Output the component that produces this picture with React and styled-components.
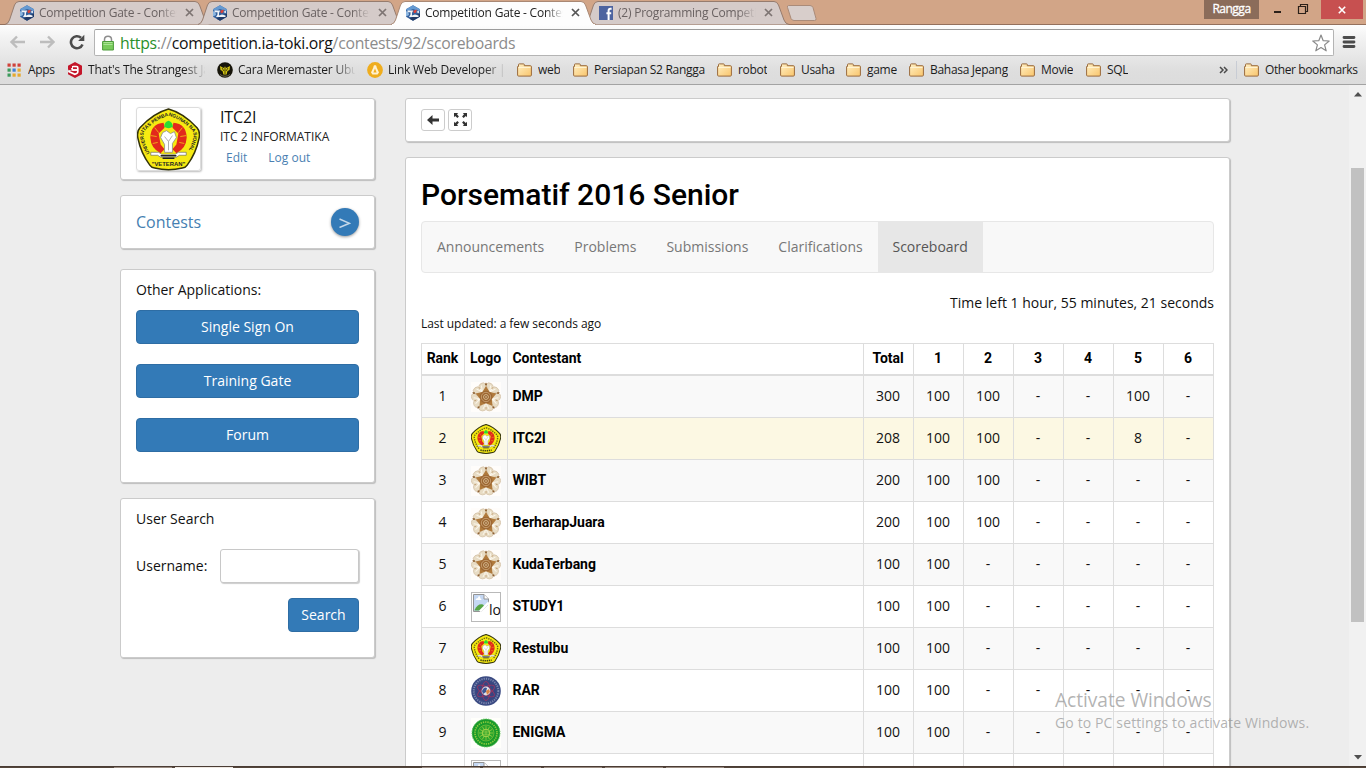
import React from "react";
import styled, { createGlobalStyle, css } from "styled-components";

const Global = createGlobalStyle`
  *, *::before, *::after { box-sizing: border-box; }
  html, body { margin: 0; padding: 0; overflow: hidden; }
  body { font-family: "Open Sans", sans-serif; font-size: 14px; color: #111; }
  svg { display: block; flex: none; }
`;

const Window = styled.div`
  position: relative;
  width: 1366px;
  height: 768px;
  display: flex;
  flex-direction: column;
  overflow: hidden;
`;

/* ---------- title bar ---------- */
const TitleBar = styled.div`
  height: 25px;
  flex: none;
  display: flex;
  align-items: flex-start;
  background: #d2a587;
  box-shadow: inset 0 -1px 0 #94705c;
  padding-left: 5px;
`;
const TabBox = styled.div`
  position: relative;
  z-index: ${(p) => (p.$active ? 3 : 1)};
  width: 205px;
  height: 25px;
  margin-right: -12px;
  flex: none;
  display: flex;
  align-items: center;
  padding: 0 0 0 14px;
`;
const TabShape = styled.svg`
  position: absolute;
  inset: 0;
  z-index: -1;
`;
const TabTitle = styled.span`
  width: 139px;
  margin-left: 4px;
  overflow: hidden;
  white-space: nowrap;
  font-size: 12px;
  letter-spacing: -0.22px;
  color: ${(p) => (p.$active ? "#222" : "#6a6262")};
  mask-image: linear-gradient(to right, #000 120px, transparent 138px);
`;
const TabClose = styled.svg`
  margin-left: 7px;
`;
const WindowControls = styled.div`
  margin-left: auto;
  display: flex;
`;
const UserBadge = styled.div`
  width: 55px;
  height: 19px;
  line-height: 18px;
  text-align: center;
  margin-right: 6px;
  background: #8b6c5a;
  color: #fff;
  font-size: 12px;
  letter-spacing: -0.5px;
  -webkit-text-stroke: 0.3px #fff;
`;
const CloseButton = styled.div`
  width: 42px;
  height: 19px;
  margin: 0 3px 0 6px;
  background: #c75050;
  display: flex;
  align-items: center;
  justify-content: center;
`;

/* ---------- toolbar ---------- */
const Chrome = styled.div`
  height: 60px;
  flex: none;
  background: linear-gradient(#fdfdfd 0, #f3f3f3 12px, #dedede 46px, #dcdcdc);
  border-bottom: 1px solid #a3a3a3;
`;
const Toolbar = styled.div`
  display: flex;
  align-items: center;
  height: 34px;
  padding: 0 9px;
`;
const Omnibox = styled.div`
  width: 1240px;
  height: 27px;
  margin: 1px 8px 0 8px;
  background: #fff;
  border: 1px solid #b4b4b4;
  border-top-color: #9b9b9b;
  border-radius: 2px;
  display: flex;
  align-items: center;
  padding: 0 3px 0 7px;
`;
const Url = styled.span`
  flex: 1;
  margin-left: 6px;
  font-size: 15.8px;
  letter-spacing: -0.26px;
  line-height: 24px;
  white-space: nowrap;
  color: #8c8c8c;
`;
const Secure = styled.span`
  color: #2a8f2a;
`;
const Host = styled.span`
  color: #111;
`;
const NavIcons = styled.div`
  display: flex;
  gap: 12px;
  align-items: center;
`;
const Bookmarks = styled.div`
  display: flex;
  align-items: center;
  height: 25px;
  margin-top: -2px;
  padding-left: 7px;
`;
const Bookmark = styled.div`
  width: ${(p) => p.$w}px;
  flex: none;
  display: flex;
  align-items: center;
  gap: ${(p) => p.$gap || 6}px;
`;
const BookmarkText = styled.span`
  font-size: 12px;
  line-height: 18px;
  letter-spacing: ${(p) => p.$ls || "-0.3px"};
  color: #1c1c1c;
  white-space: nowrap;
  overflow: hidden;
  ${(p) =>
    p.$fade &&
    css`
      width: 117px;
      letter-spacing: -0.2px;
      mask-image: linear-gradient(to right, #000 96px, transparent 118px);
    `}
`;
const Divider = styled.div`
  width: 1px;
  height: 18px;
  background: #c8ccd4;
  margin-left: 15px;
  margin-right: 7px;
`;
const More = styled.div`
  margin-left: auto;
  margin-right: -7px;
  display: flex;
`;

/* ---------- page ---------- */
const Viewport = styled.div`
  height: 681px;
  flex: none;
  display: flex;
  background: #ededed;
  overflow: hidden;
`;
const Page = styled.div`
  width: 1349px;
  display: flex;
  gap: 30px;
  padding: 13px 0 0 120px;
`;
const Sidebar = styled.div`
  width: 255px;
  display: flex;
  flex-direction: column;
`;
const Main = styled.div`
  width: 825px;
`;
const Card = styled.section`
  background: #fff;
  border: 1px solid #cbcbcb;
  border-radius: 3px;
  box-shadow: 1px 1px 1px #bdbdbd;
  height: ${(p) => p.$h}px;
  flex: none;
  padding: ${(p) => p.$pad || "0 15px"};
  margin-bottom: ${(p) => p.$mb ?? 15}px;
`;
const ProfileCard = styled(Card)`
  display: flex;
  gap: 19px;
`;
const Avatar = styled.div`
  width: 65px;
  height: 64px;
  border: 1px solid #ddd;
  border-radius: 3px;
  box-shadow: 1px 1px 2px #bbb;
`;
const ProfileName = styled.div`
  font-size: 16px;
  line-height: 20px;
  letter-spacing: -0.1px;
  margin-top: 0;
`;
const ProfileFull = styled.div`
  font-size: 12px;
  line-height: 19px;
  color: #222;
`;
const ProfileLinks = styled.div`
  display: flex;
  gap: 21px;
  padding-left: 6px;
  font-size: 12px;
  line-height: 23px;
  color: #4a7fb2;
`;
const ContestsCard = styled(Card)`
  display: flex;
  align-items: center;
  justify-content: space-between;
  font-size: 16px;
  color: #467fb2;
`;
const RoundArrow = styled.div`
  width: 28px;
  height: 28px;
  border-radius: 50%;
  background: #337ab7;
  box-shadow: 0 1px 3px #999;
  display: flex;
  align-items: center;
  justify-content: center;
`;
const Label = styled.div`
  font-size: 14px;
  line-height: 20px;
  margin-bottom: ${(p) => p.$mb || 0}px;
`;
const Button = styled.div`
  height: 34px;
  line-height: 32px;
  width: ${(p) => p.$w || "auto"};
  margin-bottom: 20px;
  text-align: center;
  color: #fff;
  font-size: 14px;
  background: #337ab7;
  border: 1px solid #2e6da4;
  border-radius: 4px;
`;
const Field = styled.div`
  display: flex;
  align-items: center;
  justify-content: space-between;
  margin: 20px 0 15px;
`;
const Input = styled.input`
  width: 139px;
  height: 34px;
  border: 1px solid #c8c8c8;
  border-radius: 3px;
  box-shadow: 1px 1px 1px #ccc;
  background: #fff;
  outline: none;
`;
const Right = styled.div`
  display: flex;
  justify-content: flex-end;
`;
const ToolCard = styled(Card)`
  display: flex;
  gap: 3px;
`;
const SmallButton = styled.div`
  width: 24px;
  height: 22px;
  border: 1px solid #ccc;
  border-radius: 3px;
  display: flex;
  align-items: center;
  justify-content: center;
  padding-bottom: 1px;
`;
const Title = styled.h1`
  margin: 0;
  font: 500 30px/33px Roboto, sans-serif;
  color: #000;
  letter-spacing: 0;
`;
const NavBar = styled.nav`
  margin-top: 10px;
  height: 52px;
  border: 1px solid #e7e7e7;
  border-radius: 4px;
  background: #f8f8f8;
  display: flex;
`;
const NavItem = styled.div`
  padding: 0 ${(p) => (p.$active ? 14.8 : 15)}px;
  line-height: 50px;
  color: ${(p) => (p.$active ? "#555" : "#777")};
  background: ${(p) => (p.$active ? "#e7e7e7" : "none")};
`;
const TimeLeft = styled.div`
  margin-top: 20px;
  text-align: right;
  line-height: 20px;
`;
const Updated = styled.div`
  font-size: 12px;
  line-height: 20px;
  letter-spacing: -0.05px;
  margin-bottom: 9px;
  margin-top: 1px;
`;
const Table = styled.div`
  width: 793px;
  border-left: 1px solid #ddd;
  border-top: 1px solid #ddd;
`;
const Row = styled.div`
  display: grid;
  grid-template-columns: 43px 43px 356px repeat(7, 50px);
  height: ${(p) => (p.$head ? 32 : 42)}px;
  background: ${(p) => (p.$mine ? "#fcf8e3" : p.$odd ? "#f9f9f9" : "#fff")};
`;
const Cell = styled.div`
  border-right: 1px solid #ddd;
  border-bottom: ${(p) => (p.$head ? 2 : 1)}px solid #ddd;
  display: flex;
  align-items: center;
  justify-content: ${(p) => (p.$left ? "flex-start" : "center")};
  padding: ${(p) => (p.$left ? "0 4.5px 2px" : p.$logo ? "0" : "0 1px 2px 0")};
  ${(p) =>
    p.$bold &&
    css`
      font-family: Roboto, sans-serif;
      font-weight: 700;
      color: #000;
      letter-spacing: -0.05px;
    `}
`;
const BrokenBox = styled.div`
  width: 30px;
  height: 30px;
  border: 1px solid #b9b9b9;
  display: flex;
  align-items: flex-start;
  overflow: hidden;
  padding: 1px;
  background: #fff;
  line-height: 32px;
`;

/* ---------- scrollbar, watermark, taskbar ---------- */
const ScrollTrack = styled.div`
  width: 17px;
  background: #f1f1f1;
  display: flex;
  flex-direction: column;
  align-items: center;
  padding: 7px 0 6px;
`;
const Thumb = styled.div`
  width: 13px;
  height: 454px;
  margin-top: 71px;
  margin-bottom: auto;
  background: #c1c1c1;
`;
const Watermark = styled.div`
  position: absolute;
  left: 1055px;
  top: 688px;
  color: rgba(150, 150, 150, 0.72);
  white-space: nowrap;
`;
const MarkTitle = styled.div`
  font-size: 19.2px;
  line-height: 24px;
  letter-spacing: -0.05px;
`;
const MarkText = styled.div`
  font-size: 14px;
  line-height: 21px;
  letter-spacing: 0.13px;
`;
const Taskbar = styled.div`
  height: 2px;
  flex: none;
  background: #54463b;
  display: flex;
  align-items: flex-end;
  padding-left: 114px;
  gap: 3px;
  border-top: 1px solid #4a3c34;
`;
const Task = styled.div`
  width: 58px;
  height: 1px;
  margin-left: ${(p) => p.$ml || 0}px;
  background: ${(p) => (p.$on ? "#eee8e2" : "#9b8d83")};
`;
const NewTab = styled.svg`
  margin-left: 8px;
`;

/* ---------- drawings ---------- */
const TokiIcon = () => (
  <svg width="16" height="16" viewBox="0 0 16 16">
    <path d="M8 .3 15 4.200V11.800L8 15.700 1 11.800V4.200Z" fill="#35609c" />
    <path d="M8 .3 15 4.200V6L11 5 8 4 3.500 6 1 5V4.200Z" fill="#659ad2" />
    <path d="M1 6 3.500 7.500 4 10 1 11.500Z" fill="#8db7e2" />
    <path d="M9 11 15 8.500V11.800L8 15.700 4.500 13.700Z" fill="#223a66" />
    <path d="M2.500 5.500H8.200L7 8V10.500L10 9.500 13.500 10.500V12H4L5.500 9.500V7.300H2.500Z" fill="#f0f3f8" />
    <path d="M8.300 5.800 11.800 4.600 11.200 7.600 9 8.300Z" fill="#df4338" />
    <path d="M11.500 7 13.800 5.500V8.300Z" fill="#fff" />
  </svg>
);
const FacebookIcon = () => (
  <svg width="16" height="16" viewBox="0 0 16 16">
    <path fill="#4d64a0" d="M1 1h14v14H1z" />
    <path d="M13.6 3.8h-1.2c-1.3 0-1.8.7-1.8 1.9V15M8.4 8.3h4.800" fill="none" stroke="#fff" strokeWidth="2" />
  </svg>
);
const Folder = () => (
  <svg width="15" height="14" viewBox="0 0 15 14">
    <defs>
      <linearGradient id="fold" x1="0" y1="0" x2="1" y2="1">
        <stop offset="0" stopColor="#fff0c4" />
        <stop offset="1" stopColor="#f9c56c" />
      </linearGradient>
    </defs>
    <path d="M.6 12V3.500H1.500V1.600Q1.500 .9 2.200 .9H6.600Q7.300 .9 7.300 1.600V2.700H13.400Q14.400 2.700 14.400 3.700V12Q14.400 13.100 13.400 13.100H1.600Q.6 13.100 .6 12Z" fill="url(#fold)" stroke="#9a6a3c" strokeWidth="1" />
    <path d="M1.500 4.400H13.500" stroke="#fff5d8" />
  </svg>
);
const AppsIcon = () => {
  const c = ["#d0423a", "#d0423a", "#d0423a", "#3c9a5c", "#3f7fd5", "#e6a92e", "#3c9a5c", "#e6a92e", "#e6a92e"];
  return (
    <svg width="14" height="14" viewBox="0 0 14 14">
      {c.map((f, i) => (
        <rect key={i} x={(i % 3) * 5 + 0.5} y={Math.floor(i / 3) * 5 + 0.5} width="3.2" height="3.2" fill={f} />
      ))}
    </svg>
  );
};
const NineIcon = () => (
  <svg width="16" height="16" viewBox="0 0 16 16">
    <path d="M8 0 15 3.800V12.200L8 16 1 12.200V8.500L5 10.500 8 11.500V8.500L1 5.500V3.800Z" fill="#c4162a" />
    <path d="M10.800 8H6.200Q4.900 8 4.900 6.700V5.900Q4.900 4.500 6.200 4.500H9.500Q10.800 4.500 10.800 5.900V9.800Q10.800 11 9.700 11.500L7.800 12.300 1.200 9.200" fill="#c4162a" stroke="#fff" strokeWidth="1.700" />
    <path d="M1 5 5 3V8.500L1 7.700Z" fill="#c4162a" />
    <path d="M5 6V6.700Q5 8 6.200 8H10.500" fill="none" stroke="#fff" strokeWidth="1.700" />
  </svg>
);
const BugIcon = () => (
  <svg width="16" height="16" viewBox="0 0 16 16">
    <circle cx="8" cy="8" r="7.800" fill="#17150a" />
    <path d="M3 4 6.500 6 8 4.500 9.500 6 13 4 12.500 8 10.500 9 9.600 12.500H6.400L5.500 9 3.500 8Z" fill="#d6c812" />
    <path d="M8 5v7M5 6l2 3M11 6 9 9" stroke="#29250a" strokeWidth=".8" />
    <path d="M3 12.500Q8 16 13 12.500" stroke="#858064" fill="none" strokeWidth=".8" />
  </svg>
);
const TuxIcon = () => (
  <svg width="16" height="16" viewBox="0 0 16 16">
    <circle cx="8" cy="8" r="7.900" fill="#efad1d" />
    <path d="M8 3Q9.800 3 9.700 5.500L12 10.500 10.600 12.500H5.400L4 10.500 6.300 5.500Q6.200 3 8 3Z" fill="#fff1cf" />
    <path d="M8 6.500 9.600 10.500H6.400Z" fill="#efad1d" />
  </svg>
);

const Upn = ({ size, detail }) => (
  <svg width={size} height={size} viewBox="0 0 64 64">
    <path
      d="M32 1Q47 5 61 20Q64.500 24 63 31Q60 46 51 58Q49.500 60.500 46 61Q32 64.500 18 61Q14.500 60.500 13 58Q4 46 1 31Q-.5 24 3 20Q17 5 32 1Z"
      fill="#f6ea12"
      stroke="#33330a"
      strokeWidth={detail ? 1.5 : 2.2}
    />
    {!detail && (
      <path d="M32 8Q45 12 55 23Q58 26 56.500 32Q54 44 47 53M17 53Q10 44 7.500 32Q6 26 9 23Q19 12 32 8" fill="none" stroke="#6d6a10" strokeWidth="3" strokeDasharray="3 2" />
    )}
    <path d="M27 15Q14 16 13.500 30Q14 41 24 46L28 42 24 37 22 26 28 20ZM37 15Q50 16 50.500 30Q50 41 40 46L36 42 40 37 42 26 36 20Z" fill="#e2291c" />
    <path d="M18 20 22 25M14 28 20 29M16 36 21 35M46 20 42 25M50 28 44 29M48 36 43 35" stroke="#f0a818" strokeWidth="1" />
    <path d="M30 23 34 26 38 24 40 30 36 36 36 45H28L28 37 24 30 26 25Z" fill="#fff" stroke="#888" strokeWidth=".8" />
    <path d="M28 29 32 34 36 28M32 34V43" stroke="#999" fill="none" strokeWidth=".8" />
    <path d="M32 13Q36 14 36.500 19Q32 22 27.500 19Q28 14 32 13Z" fill="#2bdc34" />
    <path d="M14 45H22L25 47H39L42 45H50V48H43L40 50H24L21 48H14Z" fill="#fff" stroke="#555" strokeWidth=".6" />
    <path d="M24 48.500H40M26 51H38" stroke="#222" strokeWidth="1.500" />
    {detail ? (
      <>
        <path id="upnArc" d="M13.500 47Q8 37 6.500 29Q6 25 9 22Q20 11 32 8Q44 11 55 22Q58 25 57.500 29Q56 37 50.500 47" fill="none" />
        <text fontFamily="Liberation Sans, sans-serif" fontSize="5" fontWeight="700" fill="#222">
          <textPath href="#upnArc" textLength="103" startOffset="1">
            UNIVERSITAS PEMBANGUNAN NASIONAL
          </textPath>
        </text>
        <text x="32" y="58.500" textAnchor="middle" fontFamily="Liberation Sans, sans-serif" fontSize="6" fontWeight="700" fill="#222">
          "VETERAN"
        </text>
      </>
    ) : (
      <path d="M20 55.500Q32 58.500 44 55.500" stroke="#44420c" strokeWidth="3.500" strokeDasharray="3 1.500" fill="none" />
    )}
  </svg>
);
const rot = (n, f) => Array.from({ length: n }, (_, i) => f((i * 360) / n, i));
const Ugm = () => (
  <svg width="30" height="30" viewBox="-15 -15 30 30">
    <path d="M-15-15H15V15H-15Z" fill="#fffdfb" />
    <circle r="12.500" fill="#e9dcc3" />
    {rot(5, (a) => (
      <g key={a} transform={`rotate(${a + 36})`}>
        <ellipse cx="-3.400" cy="-10" rx="4" ry="4" fill="#e8dcc4" stroke="#c9b394" strokeWidth=".5" />
        <ellipse cx="3.400" cy="-10" rx="4" ry="4" fill="#e8dcc4" stroke="#c9b394" strokeWidth=".5" />
        <path d="M-3-12 0-6 3-12M0-13V-7" fill="none" stroke="#fbf6ea" strokeWidth="1" />
        <path d="M0-12.500V-10" stroke="#b99362" strokeWidth=".8" />
      </g>
    ))}
    {rot(5, (a) => (
      <g key={a} transform={`rotate(${a})`}>
        <path d="M0-11 3.600-5H-3.600Z" fill="#b07a3c" />
        <path d="M0-14.500 1.100-12.700 0-11-1.100-12.700Z" fill="#8d5f2f" />
      </g>
    ))}
    <circle r="6.300" fill="#9c6632" />
    <circle r="4.700" fill="none" stroke="#cfa878" strokeWidth=".8" />
    <circle r="2.400" fill="#8f5a2a" stroke="#e2c79b" strokeWidth=".9" />
    <circle r=".8" fill="#f5e2b8" />
  </svg>
);
const Rar = () => (
  <svg width="30" height="30" viewBox="-15 -15 30 30">
    <circle r="14.800" fill="#3a4a82" />
    <circle r="12.300" fill="none" stroke="#7d88b0" strokeWidth="1.900" strokeDasharray="1.200 1.100" />
    <circle r="10" fill="#384581" />
    {rot(3, (a) => (
      <ellipse key={a} rx="9.500" ry="4" fill="none" stroke="#9b3560" strokeWidth=".9" transform={`rotate(${a / 2 + 30})`} />
    ))}
    <circle r="4.400" fill="#dfe3ee" />
    <path d="M-4 0Q-2-5 1-3L0 1-3 3Z" fill="#3c5795" />
    <path d="M0 0 3-2 4 1 1 4Z" fill="#d98245" />
  </svg>
);
const Enigma = () => (
  <svg width="30" height="30" viewBox="-15 -15 30 30">
    <path d="M-15-15H15V15H-15Z" fill="#fffffb" />
    <circle r="14" fill="#18992a" stroke="#5fc05a" strokeWidth="1" strokeDasharray="1.500 1" />
    <circle r="11" fill="none" stroke="#8ecb3d" strokeWidth="1.700" strokeDasharray="1.300 1" />
    <circle r="8" fill="#29a42c" stroke="#8fc83f" strokeWidth=".6" />
    {rot(12, (a) => (
      <path key={a} d="M0-3V-7.200" stroke="#8fc83f" strokeWidth=".8" transform={`rotate(${a})`} />
    ))}
    <circle r="3.800" fill="none" stroke="#a6d54c" />
    <path d="M-3-1H3M-3 1.200H3M0-3V3" stroke="#a6d54c" strokeWidth=".7" />
  </svg>
);
const Broken = () => (
  <BrokenBox>
    <svg width="16" height="18" viewBox="0 0 16 18">
      <path d="M.5.500H11L15.500 5V10.500L8 17.500H.5Z" fill="#c5d8f3" stroke="#949494" />
      <path d="M11 .5V5H15.500" fill="#fff" stroke="#949494" />
      <path d="M2.500 6Q3 4 5 4Q6-.0 7.500 4.500 8.500 5 8.500 6Z" fill="#fff" />
      <path d="M1.500 16Q5 9 10 10.500L12 13 8.500 16.500H1.500Z" fill="#57a546" />
      <path d="M7 17.500 16 8.500" stroke="#fff" strokeWidth="2.500" />
    </svg>
    lo
  </BrokenBox>
);
const logos = { upn: <Upn size={30} />, ugm: <Ugm />, rar: <Rar />, enigma: <Enigma />, broken: <Broken /> };

/* ---------- data ---------- */
const tabs = [
  { t: "Competition Gate - Contests" },
  { t: "Competition Gate - Contests" },
  { t: "Competition Gate - Contests", active: true },
  { t: "(2) Programming Competition", fb: true },
];
const bookmarks = [
  { t: "Apps", w: 60, icon: <AppsIcon />, gap: 7 },
  { t: "That's The Strangest Japan", w: 150, icon: <NineIcon />, fade: true, gap: 5 },
  { t: "Cara Meremaster Ubuntu", w: 150, icon: <BugIcon />, fade: true, gap: 5 },
  { t: "Link Web Developer | Tu", w: 150, icon: <TuxIcon />, fade: true, gap: 5 },
  { t: "web", w: 56 },
  { t: "Persiapan S2 Rangga", w: 144 },
  { t: "robot", w: 63 },
  { t: "Usaha", w: 66 },
  { t: "game", w: 63 },
  { t: "Bahasa Jepang", w: 111 },
  { t: "Movie", w: 66 },
  { t: "SQL", w: 60 },
];
const teams = [
  ["DMP", "ugm", 300, 100, 100, "-", "-", 100, "-"],
  ["ITC2I", "upn", 208, 100, 100, "-", "-", 8, "-"],
  ["WIBT", "ugm", 200, 100, 100, "-", "-", "-", "-"],
  ["BerharapJuara", "ugm", 200, 100, 100, "-", "-", "-", "-"],
  ["KudaTerbang", "ugm", 100, 100, "-", "-", "-", "-", "-"],
  ["STUDY1", "broken", 100, 100, "-", "-", "-", "-", "-"],
  ["RestuIbu", "upn", 100, 100, "-", "-", "-", "-", "-"],
  ["RAR", "rar", 100, 100, "-", "-", "-", "-", "-"],
  ["ENIGMA", "enigma", 100, 100, "-", "-", "-", "-", "-"],
  ["", "broken", "", "", "", "", "", "", ""],
];

const Tab = ({ tab }) => (
  <TabBox $active={tab.active}>
    <TabShape width="205" height="25" viewBox="0 0 205 25">
      <path
        d="M0 24.500Q3 24 4.500 20L9.500 5Q11 1.500 14 1.500H190Q193 1.500 194.500 5L200 20Q201.500 24 205 24.500"
        fill={tab.active ? "#fdfdfd" : "#d5cbc9"}
        stroke={tab.active ? "#a98874" : "#967c6e"}
      />
      {tab.active && <path d="M1 24.500H204" stroke="#fdfdfd" />}
    </TabShape>
    {tab.fb ? <FacebookIcon /> : <TokiIcon />}
    <TabTitle $active={tab.active}>{tab.t}</TabTitle>
    <TabClose width="9" height="9" viewBox="0 0 9 9">
      <path d="M1 1 8 8M8 1 1 8" stroke={tab.active ? "#555" : "#7d7472"} strokeWidth="1.700" />
    </TabClose>
  </TabBox>
);

export default function App() {
  return (
    <Window>
      <Global />
      <TitleBar>
        {tabs.map((t, i) => (
          <Tab key={i} tab={t} />
        ))}
        <NewTab width="32" height="25" viewBox="0 0 32 25">
          <path d="M3.500 5.500H25Q27 5.500 28 7.500L31 18.500Q31.500 20.500 29.500 20.500H9Q7 20.500 6 18.500L2.500 7.500Q2 5.500 3.500 5.500Z" fill="#d8cecb" stroke="#aa8b79" />
        </NewTab>
        <WindowControls>
          <UserBadge>Rangga</UserBadge>
          <svg width="50" height="19" viewBox="0 0 50 19">
            <path d="M9 11H16V13H9Z" fill="#2b2019" />
            <path d="M33.500 6.500H40.500V13.500H33.500ZM35.500 6V4.500H42.500V11.500H41" fill="none" stroke="#2b2019" strokeWidth="1.200" />
          </svg>
          <CloseButton>
            <svg width="8" height="8" viewBox="0 0 8 8">
              <path d="M.8.8 7.200 7.200M7.200.8.8 7.200" stroke="#fff" strokeWidth="1.600" />
            </svg>
          </CloseButton>
        </WindowControls>
      </TitleBar>
      <Chrome>
        <Toolbar>
          <NavIcons>
            <svg width="17" height="14" viewBox="0 0 17 14">
              <path d="M16 7H3M8 1.500 2.500 7 8 12.500" fill="none" stroke="#bdbdbd" strokeWidth="2.400" />
            </svg>
            <svg width="17" height="14" viewBox="0 0 17 14">
              <path d="M2 7H15M10 1.500 15.500 7 10 12.500" fill="none" stroke="#bdbdbd" strokeWidth="2.400" />
            </svg>
            <svg width="19" height="16" viewBox="0 0 19 16">
              <path d="M15.500 10.500A6 6 0 1 1 14 3.800" fill="none" stroke="#4c4c4c" strokeWidth="2.600" />
              <path d="M17.300.800V7H11.100Z" fill="#4c4c4c" />
            </svg>
          </NavIcons>
          <Omnibox>
            <svg width="12" height="16" viewBox="0 0 12 16">
              <path d="M2.500 7V4.500Q2.500 1.200 6 1.200T9.500 4.500V7" fill="none" stroke="#8d8d8d" strokeWidth="1.500" />
              <path d="M.6 6.500H11.400V15H.6Z" fill="#79cb5c" stroke="#4c9b3a" />
              <path d="M1.500 7.500H10.500M1.500 9.500H10.500" stroke="#aae396" />
            </svg>
            <Url>
              <Secure>https</Secure>://<Host>competition.ia-toki.org</Host>/contests/92/scoreboards
            </Url>
            <svg width="18" height="18" viewBox="0 0 18 18">
              <path d="M9 1 11.200 6.700 17.200 7 12.600 10.900 14.200 16.800 9 13.500 3.800 16.800 5.400 10.900.8 7 6.800 6.700Z" fill="#fff" stroke="#8a8a8a" strokeWidth="1.200" strokeLinejoin="round" />
            </svg>
          </Omnibox>
          <svg width="14" height="14" viewBox="0 0 14 14">
            <path d="M2 2.500H12M2 7H12M2 11.500H12" stroke="#4c4c4c" strokeWidth="2.800" strokeLinecap="round" />
          </svg>
        </Toolbar>
        <Bookmarks>
          {bookmarks.map((b, i) => (
            <Bookmark key={i} $w={b.w} $gap={b.gap}>
              {b.icon || <Folder />}
              <BookmarkText $fade={b.fade}>{b.t}</BookmarkText>
            </Bookmark>
          ))}
          <More>
            <svg width="9" height="8" viewBox="0 0 9 8">
              <path d="M1 1 4 4 1 7M5 1 8 4 5 7" fill="none" stroke="#4a4a4a" strokeWidth="1.500" />
            </svg>
          </More>
          <Divider />
          <Bookmark $w={122}>
            <Folder />
            <BookmarkText $ls="-0.4px">Other bookmarks</BookmarkText>
          </Bookmark>
        </Bookmarks>
      </Chrome>

      <Viewport>
        <Page>
          <Sidebar>
            <ProfileCard $h={82} $pad="8px 15px" $mb={15}>
              <Avatar>
                <Upn size={63} detail />
              </Avatar>
              <div>
                <ProfileName>ITC2I</ProfileName>
                <ProfileFull>ITC 2 INFORMATIKA</ProfileFull>
                <ProfileLinks>
                  <span>Edit</span>
                  <span>Log out</span>
                </ProfileLinks>
              </div>
            </ProfileCard>
            <ContestsCard $h={54} $mb={20}>
              Contests
              <RoundArrow>
                <svg width="12" height="12" viewBox="0 0 12 12">
                  <path d="M.5 3 10.500 7.300.5 11.500" fill="none" stroke="#c5d8ea" strokeWidth="1.500" />
                </svg>
              </RoundArrow>
            </ContestsCard>
            <Card $h={214} $pad="10px 15px" $mb={15}>
              <Label $mb={10}>Other Applications:</Label>
              <Button>Single Sign On</Button>
              <Button>Training Gate</Button>
              <Button>Forum</Button>
            </Card>
            <Card $h={160} $pad="10px 15px">
              <Label>User Search</Label>
              <Field>
                <Label>Username:</Label>
                <Input />
              </Field>
              <Right>
                <Button $w="71px">Search</Button>
              </Right>
            </Card>
          </Sidebar>
          <Main>
            <ToolCard $h={44} $pad="10px 15px" $mb={15}>
              <SmallButton>
                <svg width="12" height="10" viewBox="0 0 12 10">
                  <path d="M0 5 5.500 0V3.400H12V6.600H5.500V10Z" fill="#333" />
                </svg>
              </SmallButton>
              <SmallButton>
                <svg width="13" height="13" viewBox="0 0 13 13">
                  <path d="M0 0H4.200L3 1.200 4.900 3.400 3.400 4.900 1.200 3 0 4.200ZM13 0V4.200L11.800 3 9.600 4.900 8.100 3.400 10 1.200 8.800 0ZM0 13V8.800L1.200 10 3.400 8.100 4.900 9.600 3 11.800 4.200 13ZM13 13H8.800L10 11.800 8.100 9.600 9.600 8.100 11.800 10 13 8.800Z" fill="#333" />
                </svg>
              </SmallButton>
            </ToolCard>
            <Card $h={700} $pad="20px 15px">
              <Title>Porsematif 2016 Senior</Title>
              <NavBar>
                <NavItem>Announcements</NavItem>
                <NavItem>Problems</NavItem>
                <NavItem>Submissions</NavItem>
                <NavItem>Clarifications</NavItem>
                <NavItem $active>Scoreboard</NavItem>
              </NavBar>
              <TimeLeft>Time left 1 hour, 55 minutes, 21 seconds</TimeLeft>
              <Updated>Last updated: a few seconds ago</Updated>
              <Table>
                <Row $head>
                  {["Rank", "Logo", "Contestant", "Total", 1, 2, 3, 4, 5, 6].map((h) => (
                    <Cell key={h} $head $bold $left={h === "Contestant"}>
                      {h}
                    </Cell>
                  ))}
                </Row>
                {teams.map(([name, logo, ...scores], i) => (
                  <Row key={i} $odd={i % 2 === 0} $mine={i === 1}>
                    <Cell>{name && i + 1}</Cell>
                    <Cell $logo>{logos[logo]}</Cell>
                    <Cell $bold $left>
                      {name}
                    </Cell>
                    {scores.map((s, j) => (
                      <Cell key={j}>{s}</Cell>
                    ))}
                  </Row>
                ))}
              </Table>
            </Card>
          </Main>
        </Page>
        <ScrollTrack>
          <svg width="8" height="5" viewBox="0 0 8 5">
            <path d="M4 0 8 4.500H0Z" fill="#505050" />
          </svg>
          <Thumb />
          <svg width="8" height="5" viewBox="0 0 8 5">
            <path d="M4 4.500 8 0H0Z" fill="#505050" />
          </svg>
        </ScrollTrack>
      </Viewport>
      <Taskbar>
        <Task />
        <Task $on />
        <Task $ml={186} />
        <Task />
        <Task />
        <Task />
        <Task />
      </Taskbar>
      <Watermark>
        <MarkTitle>Activate Windows</MarkTitle>
        <MarkText>Go to PC settings to activate Windows.</MarkText>
      </Watermark>
    </Window>
  );
}
